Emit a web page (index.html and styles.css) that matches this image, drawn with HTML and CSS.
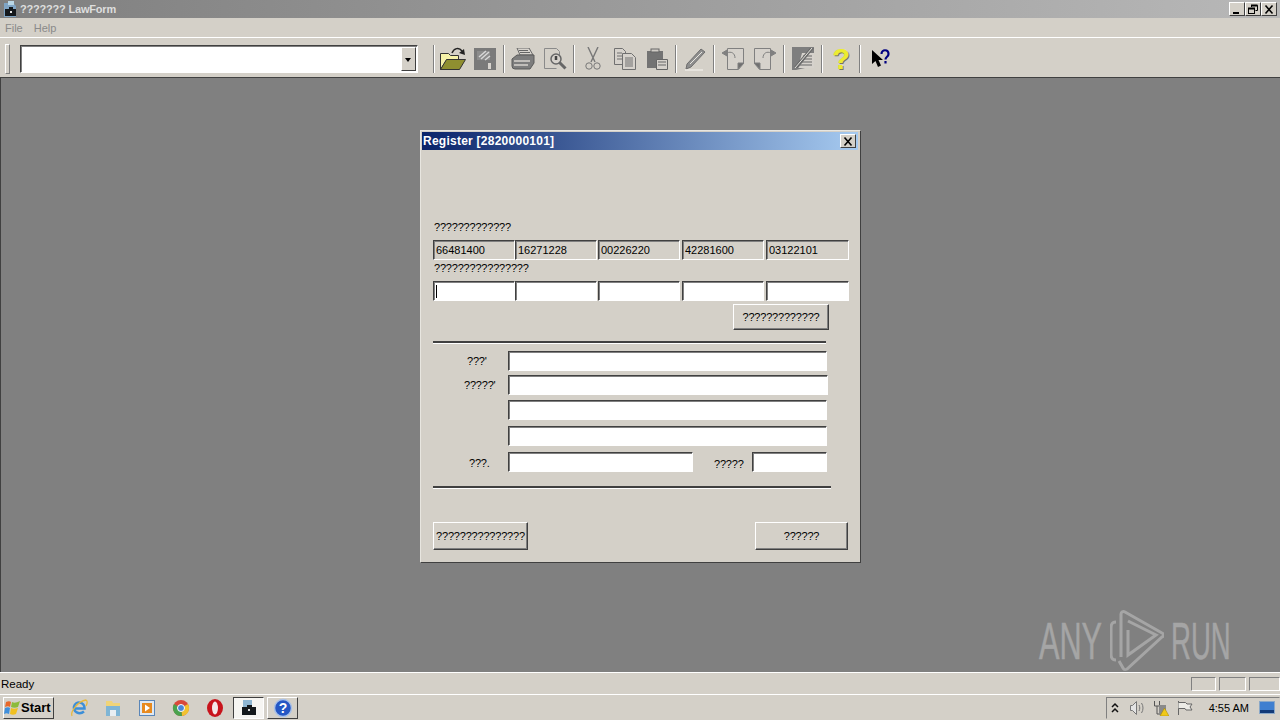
FILE: index.html
```html
<!DOCTYPE html>
<html lang="en">
<head>
    <meta charset="UTF-8">
    <title>LawForm</title>
    <link rel="stylesheet" href="styles.css">
</head>
<body>
    <div class="app">
        <div class="app-title">
            <svg class="app-icon" width="16" height="16" viewBox="0 0 16 16"><path d="M2 2h9l3 3v11H2z" fill="#7fa4c4"/><path d="M6 0h6v4H6z" fill="#b9d6e6"/><rect x="3" y="8" width="11" height="7" fill="#14181c"/><rect x="7" y="6" width="4" height="3" fill="#14181c"/><rect x="8" y="10" width="2" height="2" fill="#e8e8e8"/></svg>
            <span class="app-name">??????? LawForm</span>
            <div class="win-btns">
                <span class="win-btn"><svg width="12" height="11" viewBox="0 0 12 11"><rect x="2" y="8" width="6" height="2" fill="#000"/></svg></span>
                <span class="win-btn"><svg width="12" height="11" viewBox="0 0 12 11" fill="none" stroke="#000"><path d="M4.5 3V1.5h6v5H8.5"/><path d="M4 1.5h6.5" stroke-width="2"/><rect x="1.5" y="4.5" width="6" height="5"/><path d="M1 4.5h7" stroke-width="2"/></svg></span>
                <span class="win-btn"><svg width="12" height="11" viewBox="0 0 12 11" stroke="#000" stroke-width="1.6"><path d="M2.5 1.5l7 8M9.5 1.5l-7 8"/></svg></span>
            </div>
        </div>

        <div class="menu-bar">
            <span>File</span>
            <span>Help</span>
        </div>

        <div class="toolbar">
            <span class="grip"></span>
            <div class="combo">
                <span class="combo-arrow"></span>
            </div>
            <span class="tool-sep sep-first"></span>
            <!-- open -->
            <span class="tool"><svg width="28" height="24" viewBox="0 0 28 24"><path d="M1.5 6.5h8l2 2h8v4H8l-6.5 10z" fill="#f6f2a8" stroke="#333"/><path d="M1.5 22.500l6-10h19l-6 10z" fill="#8f8f30" stroke="#333"/><path d="M13 6c2-5 7-6 10-2" fill="none" stroke="#222" stroke-width="1.5"/><path d="M26 8l-6-2 5-4z" fill="#222"/></svg></span>
            <!-- save -->
            <span class="tool"><svg width="22" height="22" viewBox="0 0 22 22"><path d="M0 0h22v22H0z" fill="#7a7a7a"/><path d="M3 3h13v9H3z" fill="#8c8c8c"/><path d="M5 9l7-6M7 11l8-7M11 12l5-4" stroke="#d8d8d8" stroke-width="1.5"/><rect x="14" y="15" width="3" height="6" fill="#d8d4ce"/></svg></span>
            <span class="tool-sep"></span>
            <!-- print -->
            <span class="tool"><svg width="24" height="22" viewBox="0 0 24 22"><path d="M6 0h12l4 7H9z" fill="#d8d4ce" stroke="#666"/><path d="M8 2.5h9M9 4.5h10" stroke="#666"/><path d="M1 11l5-4h17v8l-4 6H4a3 3 0 0 1-3-3z" fill="#7d7d7d" stroke="#5a5a5a"/><path d="M3 13h16M3 17h14" stroke="#d8d4ce" stroke-width="1.5"/></svg></span>
            <!-- preview -->
            <span class="tool"><svg width="24" height="22" viewBox="0 0 24 22"><path d="M1.5 .5h12l3 3v5M1.5 .5v20h12" fill="none" stroke="#8a8a8a"/><circle cx="13" cy="11" r="5" fill="#d6d2cc" stroke="#666" stroke-width="1.5"/><path d="M13 8v4" stroke="#444" stroke-width="2.5"/><path d="M16.5 14.5l6 6" stroke="#666" stroke-width="3"/></svg></span>
            <span class="tool-sep"></span>
            <!-- cut -->
            <span class="tool"><svg width="16" height="24" viewBox="0 0 16 24" fill="none" stroke="#777"><path d="M3 0l7 15M13 0L6 15" stroke-width="1.4"/><circle cx="4" cy="19" r="3.2"/><circle cx="12" cy="19" r="3.2"/></svg></span>
            <!-- copy -->
            <span class="tool"><svg width="22" height="22" viewBox="0 0 22 22" stroke="#707070"><path d="M.5 .5h8l3 3v13H.5z" fill="#d6d2cc"/><path d="M3 5h5M3 8h5M3 11h5"/><path d="M8.5 5.5h9l4 4v12h-13z" fill="#d6d2cc"/><path d="M11 10h8M11 12h8M11 14h8M11 16h8M11 18h8"/></svg></span>
            <!-- paste -->
            <span class="tool"><svg width="22" height="22" viewBox="0 0 22 22"><path d="M1 3h16v17H1z" fill="#737373"/><rect x="5" y="1" width="8" height="3" fill="#d0ccc6" stroke="#666"/><path d="M10.5 11.5h11v10h-11z" fill="#d6d2cc" stroke="#666"/><path d="M12 14h8M12 17h8" stroke="#666"/></svg></span>
            <span class="tool-sep"></span>
            <!-- pen -->
            <span class="tool"><svg width="24" height="24" viewBox="0 0 24 24"><path d="M4 17L18 2l4 3L8 20l-5 2z" fill="#8e8e8e" stroke="#6e6e6e"/><path d="M7 17L19 5" stroke="#e8e6e0"/><path d="M2 23h18" stroke="#f0eee8" stroke-width="1.3"/></svg></span>
            <span class="tool-sep"></span>
            <!-- undo page -->
            <span class="tool"><svg width="22" height="22" viewBox="0 0 22 22" fill="none" stroke="#808080"><path d="M5.5 .5h16v15l-5 6h-11z" fill="#d6d2cc"/><path d="M16 21v-6h6z" fill="#707070"/><path d="M5 5c4-2 8 0 8 5"/><path d="M0 5l5-3v6z" fill="#808080"/></svg></span>
            <!-- redo page -->
            <span class="tool"><svg width="22" height="22" viewBox="0 0 22 22" fill="none" stroke="#808080"><path d="M.5 .5h16v21h-11l-5-6z" fill="#d6d2cc"/><path d="M6 21v-6H0z" fill="#707070"/><path d="M17 5c-4-2-8 0-8 5"/><path d="M22 5l-5-3v6z" fill="#808080"/></svg></span>
            <span class="tool-sep"></span>
            <!-- edit doc -->
            <span class="tool"><svg width="23" height="23" viewBox="0 0 23 23"><path d="M0 0h22v19L4 23H0z" fill="#7e7e7e"/><path d="M10 6h12v15H6z" fill="#d6d2cc"/><path d="M11 9h9M10 12h10M9 15h11M8 18h12" stroke="#666"/><path d="M2 20L18 1h4L6 21z" fill="#6a6a6a"/><path d="M3 21L20 1" stroke="#e4e2dc"/></svg></span>
            <span class="tool-sep"></span>
            <span class="tool tool-help">?</span>
            <span class="tool-sep"></span>
            <!-- context help -->
            <span class="tool tool-last"><svg width="18" height="19" viewBox="0 0 18 19"><path d="M0 1v14l3.5-3 2.5 6 3-1.5L6.5 11H11z" fill="#000"/><path d="M9.5 5c0-5 7-5 7 0 0 3-3 2.5-3 5.5M13.5 12v2.5" fill="none" stroke="#000080" stroke-width="2.2"/></svg></span>
        </div>

        <div class="workspace">
            <div class="dialog">
                <div class="dialog-title">
                    <span>Register [2820000101]</span>
                    <span class="dialog-close"><svg width="12" height="11" viewBox="0 0 12 11" stroke="#000" stroke-width="1.6"><path d="M2.5 1.5l7 8M9.5 1.5l-7 8"/></svg></span>
                </div>
                <div class="dialog-body">
                    <p class="caption caption-top">?????????????</p>
                    <div class="code-row">
                        <input class="field readonly c1" value="66481400" readonly>
                        <input class="field readonly c2" value="16271228" readonly>
                        <input class="field readonly c3" value="00226220" readonly>
                        <input class="field readonly c4" value="42281600" readonly>
                        <input class="field readonly c5" value="03122101" readonly>
                    </div>
                    <p class="caption caption-second">????????????????</p>
                    <div class="code-row">
                        <div class="field c1 has-caret"><span class="caret"></span></div>
                        <input class="field c2">
                        <input class="field c3">
                        <input class="field c4">
                        <input class="field c5">
                    </div>
                    <div class="action-row">
                        <button class="btn btn-check" type="button">?????????????</button>
                    </div>
                    <div class="divider divider-a"></div>
                    <div class="form-row row-name">
                        <label class="row-label label-a">???'</label>
                        <input class="field wide">
                    </div>
                    <div class="form-row row-addr">
                        <label class="row-label label-b">?????'</label>
                        <input class="field wider">
                    </div>
                    <div class="form-row row-addr2">
                        <span class="row-label"></span>
                        <input class="field wide">
                    </div>
                    <div class="form-row row-addr3">
                        <span class="row-label"></span>
                        <input class="field wide">
                    </div>
                    <div class="form-row row-tel">
                        <label class="row-label label-c">???.</label>
                        <input class="field tel">
                        <label class="zip-label">?????</label>
                        <input class="field zip">
                    </div>
                    <div class="divider divider-b"></div>
                    <div class="dialog-actions">
                        <button class="btn btn-left" type="button">???????????????</button>
                        <button class="btn btn-right" type="button">??????</button>
                    </div>
                </div>
            </div>
            <div class="watermark">
                <span class="wm-any">ANY</span>
                <svg width="54" height="62" viewBox="0 0 54 62" fill="none" stroke="#a5a5a5" stroke-width="3"><path d="M6 12C2 12 1 14 1 18v26c0 4 1 6 5 6"/><path d="M11 47V4c0-2 2-3 4-2l37 21c2 1 2 3 0 4L17 59c-2 1-3 1-4-1l-4-7"/><path d="M18 11l28 14-28 20V20"/></svg>
                <span class="wm-run">RUN</span>
            </div>
        </div>

        <div class="status-bar">
            <span class="status-text">Ready</span>
            <span class="status-pane pane-a"></span>
            <span class="status-pane pane-b"></span>
            <span class="status-pane pane-c"></span>
        </div>

        <div class="taskbar">
            <button class="start-btn" type="button">
                <svg width="16" height="16" viewBox="0 0 16 16"><path d="M2 2c2-1 4-1 5 0L6 7C5 6 3 6 1 7z" fill="#e8682a"/><path d="M8 2c2 1 4 1 8-1l-2 6c-2 1-5 1-7 0z" fill="#8cbb3a"/><path d="M1 8c2-1 4-1 5 0l-1 6c-2-1-3-1-5 0z" fill="#3f8fdc"/><path d="M7 8c2 1 4 1 7 0l-2 6c-2 1-4 1-6 0z" fill="#f0c020"/></svg>
                <span>Start</span>
            </button>
            <div class="task-icons">
                <svg width="20" height="20" viewBox="0 0 20 20"><path d="M5 10.5h10.5c0-7-9-8-10.500-2-1 5 5 9 10 5" fill="none" stroke="#3d8fd8" stroke-width="2.5"/><path d="M3 18C1 14 9 3 17 2c2 1 1 4 0 6" fill="none" stroke="#e8b83a" stroke-width="1.3"/></svg>
                <svg width="20" height="20" viewBox="0 0 20 20"><path d="M3 3h6l1 2h7v13H3z" fill="#f0d478"/><path d="M3 8h14v10H3z" fill="#7fb5d5"/><path d="M7 12h6v6H7z" fill="#e8eef2"/></svg>
                <svg width="20" height="20" viewBox="0 0 20 20"><rect x="2.5" y="2.5" width="15" height="15" fill="#dfe8f2" stroke="#5a86b8"/><rect x="5" y="5" width="10" height="10" fill="#e88a1e"/><path d="M8 6.5l5 3.5-5 3.5z" fill="#fff"/></svg>
                <svg width="20" height="20" viewBox="0 0 20 20"><circle cx="10" cy="10" r="8" fill="#d9483b"/><path d="M10 10l7-4a8 8 0 0 1-6 12z" fill="#f2c230"/><path d="M10 10l1 8a8 8 0 0 1-8-12z" fill="#4aa24e"/><circle cx="10" cy="10" r="3.5" fill="#4a86d8" stroke="#fff"/></svg>
                <svg width="20" height="20" viewBox="0 0 20 20"><ellipse cx="10" cy="10" rx="8" ry="9" fill="#c8141c"/><ellipse cx="10" cy="10" rx="3" ry="6.5" fill="#f4e8e8"/></svg>
            </div>
            <span class="task-btn task-active"><svg width="18" height="18" viewBox="0 0 18 18"><path d="M3 1h9v7H3z" fill="#8fb6d2"/><rect x="2" y="8" width="14" height="8" fill="#14181c"/><rect x="7" y="6" width="5" height="3" fill="#14181c"/><rect x="8" y="10" width="2" height="2" fill="#ddd"/></svg></span>
            <span class="task-btn task-help"><svg width="20" height="20" viewBox="0 0 20 20"><circle cx="10" cy="10" r="8.5" fill="#2456c4" stroke="#a8c0e8" stroke-width="1.5"/><text class="help-glyph" x="10" y="15" text-anchor="middle">?</text></svg></span>
            <div class="tray">
                <svg class="tray-up" width="10" height="12" viewBox="0 0 10 12" fill="none" stroke="#111" stroke-width="1.5"><path d="M2 5l3-3 3 3M2 10l3-3 3 3"/></svg>
                <svg width="16" height="16" viewBox="0 0 16 16" fill="none" stroke="#777"><path d="M1.5 5.5h2l4-4v13l-4-4h-2z" fill="#e4e4e4"/><path d="M10 5c1 2 1 4 0 6M12.5 3c2 3 2 7 0 10"/></svg>
                <svg width="16" height="16" viewBox="0 0 16 16"><path d="M1.5 1v5h5V1M4 6v8h3" fill="none" stroke="#555"/><rect x="6" y="5" width="7" height="10" fill="#8a8a8a"/><path d="M11.5 8l4.5 8H7z" fill="#f0c818" stroke="#a08000" stroke-width=".5"/></svg>
                <svg width="16" height="16" viewBox="0 0 16 16" fill="none" stroke="#666"><path d="M1.5 1v14"/><path d="M1.5 2.5h7l1.5 1.500h5l-2 3 2 3h-6L8 8.5H1.5" fill="#ecebe6"/></svg>
                <span class="clock">4:55 AM</span>
                <svg class="tray-desktop" width="16" height="14" viewBox="0 0 16 14"><rect x=".5" y=".5" width="15" height="12" fill="#3f7fd0" stroke="#8aa8c8"/><rect x="1" y="9" width="14" height="3" fill="#123a78"/></svg>
            </div>
        </div>
    </div>
</body>
</html>
```

FILE: styles.css
```css
* {
    box-sizing: border-box;
}

html, body {
    margin: 0;
    height: 100%;
    overflow: hidden;
}

body {
    font-family: "Liberation Sans", Arial, sans-serif;
    font-size: 11px;
    color: #000;
    background-color: #d4d0c8;
}

.app {
    display: flex;
    flex-direction: column;
    width: 1280px;
    height: 720px;
}

/* main window title */
.app-title {
    display: flex;
    align-items: center;
    height: 18px;
    flex: none;
    padding: 0 3px 0 2px;
    background: linear-gradient(to right, #7f7f7f, #b8b8b8);
}

.app-name {
    margin-left: 2px;
    font-weight: bold;
    font-size: 11px;
    letter-spacing: -0.2px;
    color: #dedede;
}

.win-btns {
    display: flex;
    margin-left: auto;
}

.win-btn, .dialog-close {
    display: flex;
    align-items: center;
    justify-content: center;
    width: 16px;
    height: 14px;
    background-color: #d4d0c8;
    border: 1px solid;
    border-color: #fff #404040 #404040 #fff;
}

.menu-bar {
    display: flex;
    gap: 11px;
    align-items: center;
    height: 20px;
    flex: none;
    padding: 1px 5px 0;
    font-size: 11px;
    color: #8a8a8a;
    background-color: #d4d0c8;
    border-bottom: 1px solid #fff;
}

.toolbar {
    display: flex;
    align-items: center;
    height: 40px;
    flex: none;
    padding: 2px 0 0 5px;
    background-color: #d4d0c8;
    border-bottom: 1px solid #404040;
}

.grip {
    width: 5px;
    height: 30px;
    border: 1px solid;
    border-color: #fff #808080 #808080 #fff;
}

.combo {
    position: relative;
    width: 398px;
    height: 28px;
    margin-left: 10px;
    background-color: #fff;
    border: 1px solid;
    border-color: #404040 #fff #fff #404040;
    box-shadow: inset 1px 1px 0 #808080;
}

.combo-arrow {
    position: absolute;
    top: 1px;
    right: 1px;
    bottom: 1px;
    width: 15px;
    background-color: #d4d0c8;
    border: 1px solid;
    border-color: #fff #404040 #404040 #fff;
}

.combo-arrow::after {
    content: "";
    position: absolute;
    top: 10px;
    left: 3px;
    border: 3px solid transparent;
    border-top: 4px solid #000;
}

.tool-sep {
    width: 2px;
    height: 28px;
    margin: 0 2px;
    border-left: 1px solid #808080;
    border-right: 1px solid #fff;
    flex: none;
}

.sep-first {
    margin-left: 15px;
}

.tool {
    display: flex;
    align-items: center;
    justify-content: center;
    width: 32px;
    height: 26px;
    flex: none;
}

.tool-help {
    font-family: "Liberation Sans", sans-serif;
    font-weight: bold;
    font-size: 29px;
    line-height: 26px;
    color: #ecec30;
    text-shadow: 1px 1px 0 #77775a;
}

.tool-last {
    margin-left: 2px;
}

.workspace {
    position: relative;
    flex: 1;
    background-color: #808080;
    border-left: 1px solid #404040;
}

/* dialog over the workspace */
.dialog {
    position: absolute;
    left: 419px;
    top: 52px;
    width: 441px;
    height: 433px;
    padding: 1px 2px 2px 1px;
    background-color: #d4d0c8;
    border: 1px solid;
    border-color: #e8e6e0 #404040 #404040 #e8e6e0;
}

.dialog-title {
    display: flex;
    align-items: center;
    justify-content: space-between;
    height: 18px;
    padding: 0 2px 0 1px;
    font-size: 12px;
    letter-spacing: 0.25px;
    font-weight: bold;
    color: #fff;
    background: linear-gradient(to right, #0a246a, #a6caf0);
}

.dialog-body {
    padding: 70px 0 0 11px;
}

.caption {
    margin: 0;
    height: 14px;
    line-height: 14px;
    letter-spacing: -0.2px;
}

.caption-top {
    margin-left: 1px;
}

.caption-second {
    margin: 1px 0 0 1px;
}

.code-row {
    display: flex;
    margin-top: 6px;
}

.field {
    display: block;
    height: 20px;
    padding: 0 0 0 2px;
    font: inherit;
    color: #000;
    background-color: #fff;
    border: 1px solid;
    border-color: #404040 #fff #fff #404040;
    box-shadow: inset 1px 1px 0 #808080;
    outline: none;
}

.readonly {
    background-color: #d4d0c8;
}

.c1, .c2 { width: 82px; }
.c3 { width: 82px; margin-left: 1px; }
.c4 { width: 82px; margin-left: 2px; }
.c5 { width: 83px; margin-left: 2px; }

.has-caret {
    display: flex;
    align-items: center;
}

.caret {
    width: 1px;
    height: 13px;
    background-color: #000;
}

.action-row {
    display: flex;
    margin: 3px 0 0 300px;
}

.btn {
    height: 26px;
    padding: 0;
    font: inherit;
    letter-spacing: -0.2px;
    color: #000;
    background-color: #d4d0c8;
    border: 1px solid;
    border-color: #fff #404040 #404040 #fff;
    box-shadow: inset -1px -1px 0 #808080;
}

.btn-check { width: 96px; }

.divider {
    height: 3px;
    background-color: #404040;
    border-bottom: 1px solid #fff;
}

.divider-a {
    width: 393px;
    margin-top: 11px;
}

.divider-b {
    width: 398px;
    margin-top: 14px;
}

.form-row {
    display: flex;
    align-items: center;
}

.row-name { margin-top: 7px; }
.row-addr { margin-top: 4px; }
.row-addr2 { margin-top: 5px; }
.row-addr3 { margin-top: 6px; }
.row-tel { margin-top: 6px; }

.row-label {
    width: 75px;
    flex: none;
    letter-spacing: -0.2px;
}

.label-a { padding-left: 34px; }
.label-b { padding-left: 31px; }
.label-c { padding: 1px 0 0 36px; }

.wide { width: 319px; }
.wider { width: 320px; }
.tel { width: 185px; }

.zip-label {
    margin: 4px 0 0 21px;
    width: 38px;
    letter-spacing: -0.2px;
}

.zip {
    width: 75px;
}

.watermark {
    position: absolute;
    left: 1038px;
    top: 532px;
    display: flex;
    align-items: center;
    font-size: 52px;
    line-height: 62px;
    color: #a5a5a5;
}

.watermark span {
    display: inline-block;
    transform-origin: left center;
    white-space: nowrap;
    -webkit-text-stroke: 0.5px #a5a5a5;
}

.wm-any {
    width: 71px;
    transform: scaleX(0.59);
}

.wm-run {
    width: 60px;
    margin-left: 7px;
    transform: scaleX(0.53);
}

.dialog-actions {
    display: flex;
    justify-content: space-between;
    width: 415px;
    margin-top: 33px;
}

.btn-left {
    width: 95px;
    height: 28px;
}

.btn-right {
    width: 93px;
    height: 28px;
}

.status-bar {
    display: flex;
    align-items: center;
    height: 23px;
    flex: none;
    padding: 2px 0 2px 1px;
    background-color: #d4d0c8;
    border-top: 1px solid #fff;
    border-bottom: 1px solid #fff;
}

.status-text {
    margin-right: auto;
    font-size: 11.5px;
}

.status-pane {
    height: 14px;
    margin-left: 3px;
    border: 1px solid;
    border-color: #808080 #fff #fff #808080;
}

.pane-a { width: 25px; }
.pane-b { width: 27px; }
.pane-c { width: 31px; }

.taskbar {
    display: flex;
    align-items: center;
    height: 25px;
    flex: none;
    padding-left: 3px;
    background-color: #d4d0c8;
}

.start-btn {
    display: flex;
    align-items: center;
    gap: 1px;
    width: 51px;
    height: 22px;
    padding: 0;
    font: bold 13px "Liberation Sans", sans-serif;
    color: #000;
    background-color: #d4d0c8;
    border: 1px solid;
    border-color: #fff #404040 #404040 #fff;
}

.task-icons {
    display: flex;
    gap: 14px;
    margin-left: 15px;
}

.task-btn {
    display: flex;
    align-items: center;
    justify-content: center;
    width: 31px;
    height: 22px;
    border: 1px solid;
}

.task-active {
    margin-left: 8px;
    background-color: #f6f5f2;
    border-color: #404040 #fff #fff #404040;
}

.task-help {
    margin-left: 3px;
    border-color: #fff #404040 #404040 #fff;
}

.help-glyph {
    font: bold 14px "Liberation Sans", sans-serif;
    fill: #fff;
}

.tray {
    display: flex;
    align-items: center;
    gap: 8px;
    height: 22px;
    margin-left: auto;
    padding: 0 4px 0 3px;
    border: 1px solid;
    border-color: #808080 transparent transparent #808080;
}

.tray-up {
    margin-right: 1px;
}

.clock {
    margin-left: 8px;
    font-size: 11px;
    white-space: nowrap;
}

.tray-desktop {
    margin-left: 2px;
}
```
